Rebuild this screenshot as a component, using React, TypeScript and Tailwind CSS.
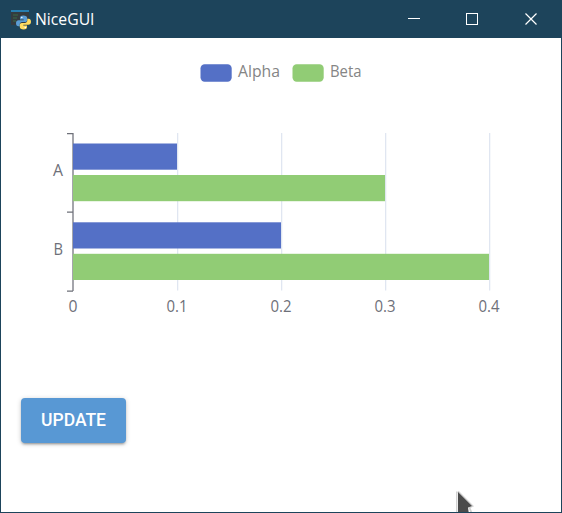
import React from "react";

const font = "font-['Open_Sans','Noto_Sans',sans-serif]";

function PythonWindowIcon() {
  return (
    <svg width="20" height="20" viewBox="0 0 20 20" className="shrink-0">
      <rect x="0" y="0" width="18" height="15" fill="#343b3f" />
      <rect x="0" y="0" width="18" height="2" fill="#277eb0" />
      <path d="M2 5h5M2 8h4M2 11h3" stroke="#386c45" strokeWidth="1.2" />
      <path
        d="M12.300 5.500c-2.500 0-3.300 1-3.300 2.400v1.500h3.700v.8H7.600C6 10.200 5 11.500 5 13.200s.9 3 2.400 3h1.300v-1.600c0-1.500 1.100-2.500 2.500-2.500h3c1.200 0 2-.9 2-2.100V7.900c0-1.500-1.300-2.400-3.900-2.400z"
        fill="#5b9dd4"
      />
      <path
        d="M12.700 19.500c2.500 0 3.300-1 3.300-2.400v-1.500h-3.700v-.8h5.100c1.600 0 2.600-1.300 2.600-3s-.9-3-2.400-3h-1.300v1.600c0 1.500-1.100 2.500-2.500 2.500h-3c-1.200 0-2 .9-2 2.100v2.100c0 1.500 1.300 2.400 3.900 2.400z"
        fill="#ffdc62"
      />
      <circle cx="10.800" cy="7.500" r=".8" fill="#fff" />
      <circle cx="14.300" cy="17.500" r=".8" fill="#fff" />
    </svg>
  );
}

function TitleBar() {
  return (
    <header className="flex h-[37px] shrink-0 items-center bg-[#1d445b] pl-[10px] text-white">
      <PythonWindowIcon />
      <svg width="70" height="37" className={`${font} text-[15.500px]`} fill="#fff">
        <text x="4" y="24" textLength="59.500" lengthAdjust="spacingAndGlyphs">NiceGUI</text>
      </svg>
      <div className="ml-auto flex">
        <svg width="58" height="37" stroke="#fff" fill="none"><path d="M21 17.500h12" /></svg>
        <svg width="58" height="37" stroke="#fff" fill="none"><rect x="21.500" y="12.500" width="11" height="11" /></svg>
        <svg width="58" height="37" stroke="#fff" strokeWidth="1.200" fill="none"><path d="M22.500 12.500l11 11M33.500 12.500l-11 11" /></svg>
      </div>
    </header>
  );
}

function Legend() {
  const items = [
    { name: "Alpha", color: "#5470c6", x: 200, tx: 238, w: 42 },
    { name: "Beta", color: "#91cc75", x: 292, tx: 330, w: 31.500 },
  ];
  return (
    <g>
      {items.map((i) => (
        <g key={i.name}>
          <rect x={i.x + 0.500} y="64.200" width="31.200" height="17.600" rx="4.200" fill={i.color} />
          <text x={i.tx} y="77" fill="#858585" textLength={i.w} lengthAdjust="spacingAndGlyphs">{i.name}</text>
        </g>
      ))}
    </g>
  );
}

function BarChart() {
  const ticks = [
    { label: "0", x: 73, w: 9 },
    { label: "0.1", x: 177, w: 21 },
    { label: "0.2", x: 281, w: 21 },
    { label: "0.3", x: 385, w: 21 },
    { label: "0.4", x: 489, w: 21 },
  ];
  const bars = [
    { y: 143.500, end: 177, color: "#5470c6" },
    { y: 175, end: 385, color: "#91cc75" },
    { y: 222.300, end: 281, color: "#5470c6" },
    { y: 253.800, end: 489, color: "#91cc75" },
  ];
  return (
    <svg width="560" height="340" viewBox="1 38 560 340" className={`${font} block text-[16px]`}>
      <Legend />
      {ticks.slice(1).map((t) => (
        <path key={t.label} d={`M${t.x + 0.650} 133V290.500`} stroke="#e0e6f1" strokeWidth="1.300" />
      ))}
      <path d="M73 133V291M67 133.500h6M67 212h6M67 291h6" stroke="#6e7079" strokeWidth="1.250" fill="none" />
      {bars.map((b) => (
        <rect key={b.y} x="73" y={b.y} width={b.end - 73} height="26.200" fill={b.color} />
      ))}
      <g fill="#6e7079">
        <text x="53" y="176" textLength="10" lengthAdjust="spacingAndGlyphs">A</text>
        <text x="53.500" y="255" textLength="9.500" lengthAdjust="spacingAndGlyphs">B</text>
        {ticks.map((t) => (
          <text key={t.label} x={t.x - t.w / 2} y="312" textLength={t.w} lengthAdjust="spacingAndGlyphs">{t.label}</text>
        ))}
      </g>
    </svg>
  );
}

function Pointer() {
  return (
    <svg width="24" height="24" viewBox="456 489 24 24" className="absolute -bottom-px left-[455px]">
      <path d="M456.500 491.500V513M458 491.500l14.500 14.500-3 1.500 2 5.500" stroke="#d2d2d2" strokeWidth="1.800" fill="none" />
      <path d="M458 492v21h10.800l-.8-5.500 4-1.500z" fill="#4b4b4b" />
    </svg>
  );
}

export default function App() {
  return (
    <div className="relative flex h-[513px] w-[562px] flex-col overflow-hidden border border-[#1d445b] bg-white">
      <TitleBar />
      <main className="flex flex-col items-start">
        <BarChart />
        <button className="ml-5 mt-5 flex h-[45px] w-[105px] items-center justify-center rounded-[4px] bg-[#5898d4] font-['Roboto',sans-serif] text-[17.500px] font-medium text-white shadow-[0_1px_5px_rgba(0,0,0,0.2),0_2px_2px_rgba(0,0,0,0.14),0_3px_1px_-2px_rgba(0,0,0,0.12)]">
          UPDATE
        </button>
      </main>
      <Pointer />
    </div>
  );
}
